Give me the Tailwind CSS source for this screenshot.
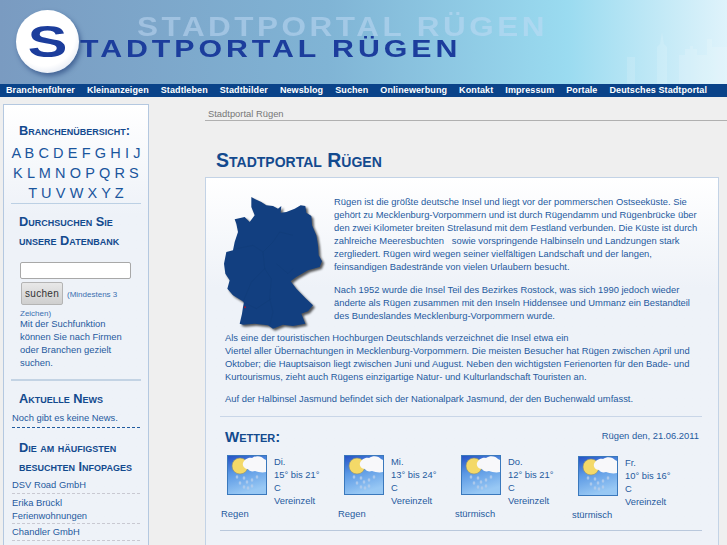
<!DOCTYPE html>
<html lang="de">
<head>
<meta charset="UTF-8" />
<title>Stadtportal Rügen</title>
<script src="https://cdn.jsdelivr.net/npm/@tailwindcss/browser@4"></script>
</head>
<body class="h-[545px] w-[727px] overflow-hidden bg-[#efefef] font-['Liberation_Sans',Arial,sans-serif] text-[9.4px] leading-[13px] text-[#1f5a9e]">
  <svg class="absolute h-0 w-0">
    <defs>
      <linearGradient id="sky" x1="0" y1="0" x2="0.3" y2="1"><stop offset="0" stop-color="#2450c4"/><stop offset=".45" stop-color="#5a98e4"/><stop offset="1" stop-color="#98c8f4"/></linearGradient>
      <symbol id="weather" viewBox="0 0 40 40">
        <rect x=".5" y=".5" width="39" height="39" fill="url(#sky)" stroke="#3a78bc"/>
        <circle cx="13" cy="11" r="8" fill="#f4d968" stroke="#8f8f70" stroke-width=".6"/>
        <path d="M16 8c1-3 5-6 9-5 4-3 10-2 12 1l2 1v12c-4 1-8 0-11-1-3 1-6 0-7-2-3 0-6-3-5-6z" fill="#f8f8fa"/>
        <g fill="#b4cdec" opacity=".85"><ellipse cx="10" cy="22" rx="1.3" ry="1.8"/><ellipse cx="17" cy="23" rx="1.3" ry="1.8"/><ellipse cx="25" cy="25" rx="1.3" ry="1.8"/><ellipse cx="30" cy="22" rx="1.3" ry="1.8"/><ellipse cx="13" cy="28" rx="1.3" ry="1.8"/><ellipse cx="20" cy="27" rx="1.3" ry="1.8"/><ellipse cx="25" cy="31" rx="1.3" ry="1.8"/><ellipse cx="17" cy="32" rx="1.3" ry="1.8"/><ellipse cx="21" cy="33" rx="1.3" ry="1.8"/></g>
      </symbol>
    </defs>
  </svg>

  <!-- header -->
  <header class="relative h-[84px] overflow-hidden bg-[linear-gradient(to_right,#7a9bc1_0%,#80b4d5_45%,#9adbf0_78%,#dff3fb_100%)]">
    <svg class="absolute right-0 top-[25px]" width="100" height="59" viewBox="0 0 100 59">
      <path d="M0 59V32h8v27h22V22l3-3 2-12 2 12 3 3v37h12V30h6v-6h5v-3h3v3h4v6h10V14h5v8h15v37z" fill="#fff" fill-opacity=".14"/>
    </svg>
    <div class="absolute left-[137px] top-[17px] origin-left scale-x-[1.166] text-[27px] leading-[20px] font-bold tracking-[3px] whitespace-nowrap text-[#c4dcf5]/50 uppercase">Stadtportal Rügen</div>
    <div class="absolute left-[80px] top-[41px] origin-left scale-x-[1.317] text-[23px] leading-[17px] font-bold tracking-[3px] whitespace-nowrap text-[#1c3d9c] uppercase">tadtportal Rügen</div>
    <div class="absolute left-[16px] top-[10px] flex h-[63px] w-[63px] items-center justify-center rounded-full bg-[radial-gradient(circle_at_45%_40%,#ffffff_60%,#c9d3e6_100%)] shadow-[2px_3px_5px_rgba(20,50,110,.55)]">
      <span class="scale-x-[1.35] text-[44px] leading-[44px] font-bold text-[#1c3d9c]">S</span>
    </div>
  </header>

  <nav class="flex h-[13px] items-center gap-[12px] bg-[#0a4389] pl-[6px] text-[9px] leading-[13px] font-bold tracking-[0.1px] whitespace-nowrap text-white">
    <a>Branchenführer</a><a>Kleinanzeigen</a><a>Stadtleben</a><a>Stadtbilder</a><a>Newsblog</a><a>Suchen</a><a>Onlinewerbung</a><a>Kontakt</a><a>Impressum</a><a>Portale</a><a>Deutsches Stadtportal</a>
  </nav>

  <div class="flex items-start pt-[7px]">
    <!-- sidebar -->
    <aside class="ml-[3px] h-[460px] w-[146px] shrink-0 border border-[#b4c8e0] bg-gradient-to-b from-white to-[#eef2f8] to-[110px]">
      <h3 class="mt-[19px] pl-[15px] text-[12.8px] leading-[14px] font-bold text-[#134a8e] [font-variant:small-caps]">Branchenübersicht:</h3>
      <div class="mt-[5px] text-center text-[14.5px] leading-[20px] tracking-[0.1px] whitespace-nowrap text-[#1a559d]">A B C D E F G H I J<br />K L M N O P Q R S<br />T U V W X Y Z</div>
      <div class="mx-[7px] h-px bg-[#bcd0e4]"></div>
      <h3 class="mt-[8px] pl-[15px] text-[12.8px] leading-[19px] font-bold text-[#134a8e] [font-variant:small-caps]">Durchsuchen Sie<br />unsere Datenbank</h3>
      <input type="text" class="mt-[12px] ml-[16px] block h-[17px] w-[111px] rounded-[2px] border border-[#a8a8a8] bg-white" />
      <div class="mt-[3px] ml-[16px] w-[125px] leading-[18px]">
        <button class="float-left mr-[4px] ml-px h-[23px] w-[42px] rounded-[2px] border border-[#b4b4b4] bg-gradient-to-b from-[#e8e8e8] to-[#cfcfcf] text-[10px] tracking-[0.3px] text-[#333]">suchen</button>
        <span class="relative top-[1px] text-[8px] leading-[23px] text-[#3a6fb0]">(Mindestens 3</span>
        <div class="clear-both pt-[3px] text-[8px] leading-[12px] text-[#3a6fb0]">Zeichen)</div>
      </div>
      <p class="-mt-[3px] pl-[16px]">Mit der Suchfunktion<br />können Sie nach Firmen<br />oder Branchen gezielt<br />suchen.</p>
      <div class="mx-[7px] mt-[10px] h-[2px] bg-[#c3d3e4]"></div>
      <h3 class="mt-[8px] pl-[15px] text-[12.8px] leading-[19px] font-bold text-[#134a8e] [font-variant:small-caps]">Aktuelle News</h3>
      <p class="mx-[8px] mt-[3px] border-b border-dashed border-[#1f5a9e] pb-[3px]">Noch gibt es keine News.</p>
      <h3 class="mt-[10px] pl-[15px] text-[12.8px] leading-[19px] font-bold text-[#134a8e] [font-variant:small-caps]">Die am häufigsten<br />besuchten Infopages</h3>
      <ul class="mx-[8px] mt-[2px]">
        <li class="border-b border-dashed border-[#c9c9d2] pb-[2px]">DSV Road GmbH</li>
        <li class="border-b border-dashed border-[#c9c9d2] pt-[2px] pb-[1px]">Erika Brückl<br />Ferienwohnungen</li>
        <li class="border-b border-dashed border-[#c9c9d2] pt-[1px] pb-[2px]">Chandler GmbH</li>
      </ul>
    </aside>

    <!-- main -->
    <main class="ml-[56px] min-w-0 flex-1">
      <div class="h-[17px] border-b border-[#b0b0b0] pt-[3px] pl-[3px] text-[#777]">Stadtportal Rügen</div>
      <h1 class="mt-[28px] pl-[11px] text-[19.5px] leading-[22px] font-bold text-[#134a8e] [font-variant:small-caps]">Stadtportal Rügen</h1>
      <section class="mt-[6px] mr-[8px] h-[400px] border border-[#c3d3e6] bg-gradient-to-b from-white to-[#eef2f8] to-[110px] px-[19px] pt-[17px]">
        <!-- Deutschlandkarte -->
        <svg class="float-left -mt-[3px] mr-[4px] -mb-[3px] -ml-[7px] h-[142px] w-[112px] drop-shadow-[2px_2px_1px_rgba(0,0,0,.65)]" viewBox="0 0 336 426">
          <path d="M100 15l12 7 18 8 15 10 20 2 15 8 10-8-2 20 17-2 25-10 18-10 14 2 3 20 15 10 2 28 13 30 5 30 2 30 10 18-7 17-35 10-35 20-17 13 17 22 27 28 23 22-15 18-20 7 12 30-37 7-30-4-30 12-15-10-40-5-35 3-10-3 7-30 3-20 3-15-33-20-17-20 7-25-13-20-4-30 7-35 20-5 5-25 10-30-5-25-5-13 30-7 15 15 15-20-10-25z" fill="#123f80"/>
          <path d="M55 170l50-10 30 20 30-30 20-30 40 10M135 180l5 50-40 40-25 60M175 215l35 30 15-15M140 230l20 30-5 60 10 40-10 40M75 330l40 20 45-30" fill="none" stroke="#0f3974" stroke-width="1.2"/>
          <circle cx="81" cy="346" r="3" fill="#a01830"/>
        </svg>
        <p>Rügen ist die größte deutsche Insel und liegt vor der pommerschen Ostseeküste. Sie<br />gehört zu Mecklenburg-Vorpommern und ist durch Rügendamm und Rügenbrücke über<br />den zwei Kilometer breiten Strelasund mit dem Festland verbunden. Die Küste ist durch<br />zahlreiche Meeresbuchten &nbsp; sowie vorspringende Halbinseln und Landzungen stark<br />zergliedert. Rügen wird wegen seiner vielfältigen Landschaft und der langen,<br />feinsandigen Badestrände von vielen Urlaubern besucht.</p>
        <p class="mt-[10px]">Nach 1952 wurde die Insel Teil des Bezirkes Rostock, was sich 1990 jedoch wieder<br />änderte als Rügen zusammen mit den Inseln Hiddensee und Ummanz ein Bestandteil<br />des Bundeslandes Mecklenburg-Vorpommern wurde.</p>
        <p class="clear-both mt-[9px]">Als eine der touristischen Hochburgen Deutschlands verzeichnet die Insel etwa ein<br />Viertel aller Übernachtungen in Mecklenburg-Vorpommern. Die meisten Besucher hat Rügen zwischen April und<br />Oktober; die Hauptsaison liegt zwischen Juni und August. Neben den wichtigsten Ferienorten für den Bade- und<br />Kurtourismus, zieht auch Rügens einzigartige Natur- und Kulturlandschaft Touristen an.</p>
        <p class="mt-[9px]">Auf der Halbinsel Jasmund befindet sich der Nationalpark Jasmund, der den Buchenwald umfasst.</p>
        <div class="mt-[11px] -mr-[3px] -ml-[5px] border-t border-[#c9d6e8]"></div>
        <div class="mt-[11px] -ml-[4px] flex items-start justify-between">
          <h2 class="pl-[4px] text-[15px] leading-[18px] font-bold text-[#134a8e] [font-variant:small-caps]">Wetter:</h2>
          <span class="pt-[1px]">Rügen den, 21.06.2011</span>
        </div>
        <div class="mt-[9px] -ml-[4px] flex">
          <div class="w-[117px]">
            <svg class="float-left mr-[7px] mb-[10px] ml-[6px] h-[40px] w-[40px]"><use href="#weather"/></svg>
            <div>Di.<br />15° bis 21°<br />C<br />Vereinzelt<br />Regen</div>
          </div>
          <div class="w-[117px]">
            <svg class="float-left mr-[7px] mb-[10px] ml-[6px] h-[40px] w-[40px]"><use href="#weather"/></svg>
            <div>Mi.<br />13° bis 24°<br />C<br />Vereinzelt<br />Regen</div>
          </div>
          <div class="w-[117px]">
            <svg class="float-left mr-[7px] mb-[10px] ml-[6px] h-[40px] w-[40px]"><use href="#weather"/></svg>
            <div>Do.<br />12° bis 21°<br />C<br />Vereinzelt<br />stürmisch</div>
          </div>
          <div class="w-[117px] pt-px">
            <svg class="float-left mr-[7px] mb-[10px] ml-[6px] h-[40px] w-[40px]"><use href="#weather"/></svg>
            <div>Fr.<br />10° bis 16°<br />C<br />Vereinzelt<br />stürmisch</div>
          </div>
        </div>
        <div class="mt-[9px] -mr-[3px] -ml-[5px] border-t border-[#b9c8dc]"></div>
      </section>
    </main>
  </div>
</body>
</html>
